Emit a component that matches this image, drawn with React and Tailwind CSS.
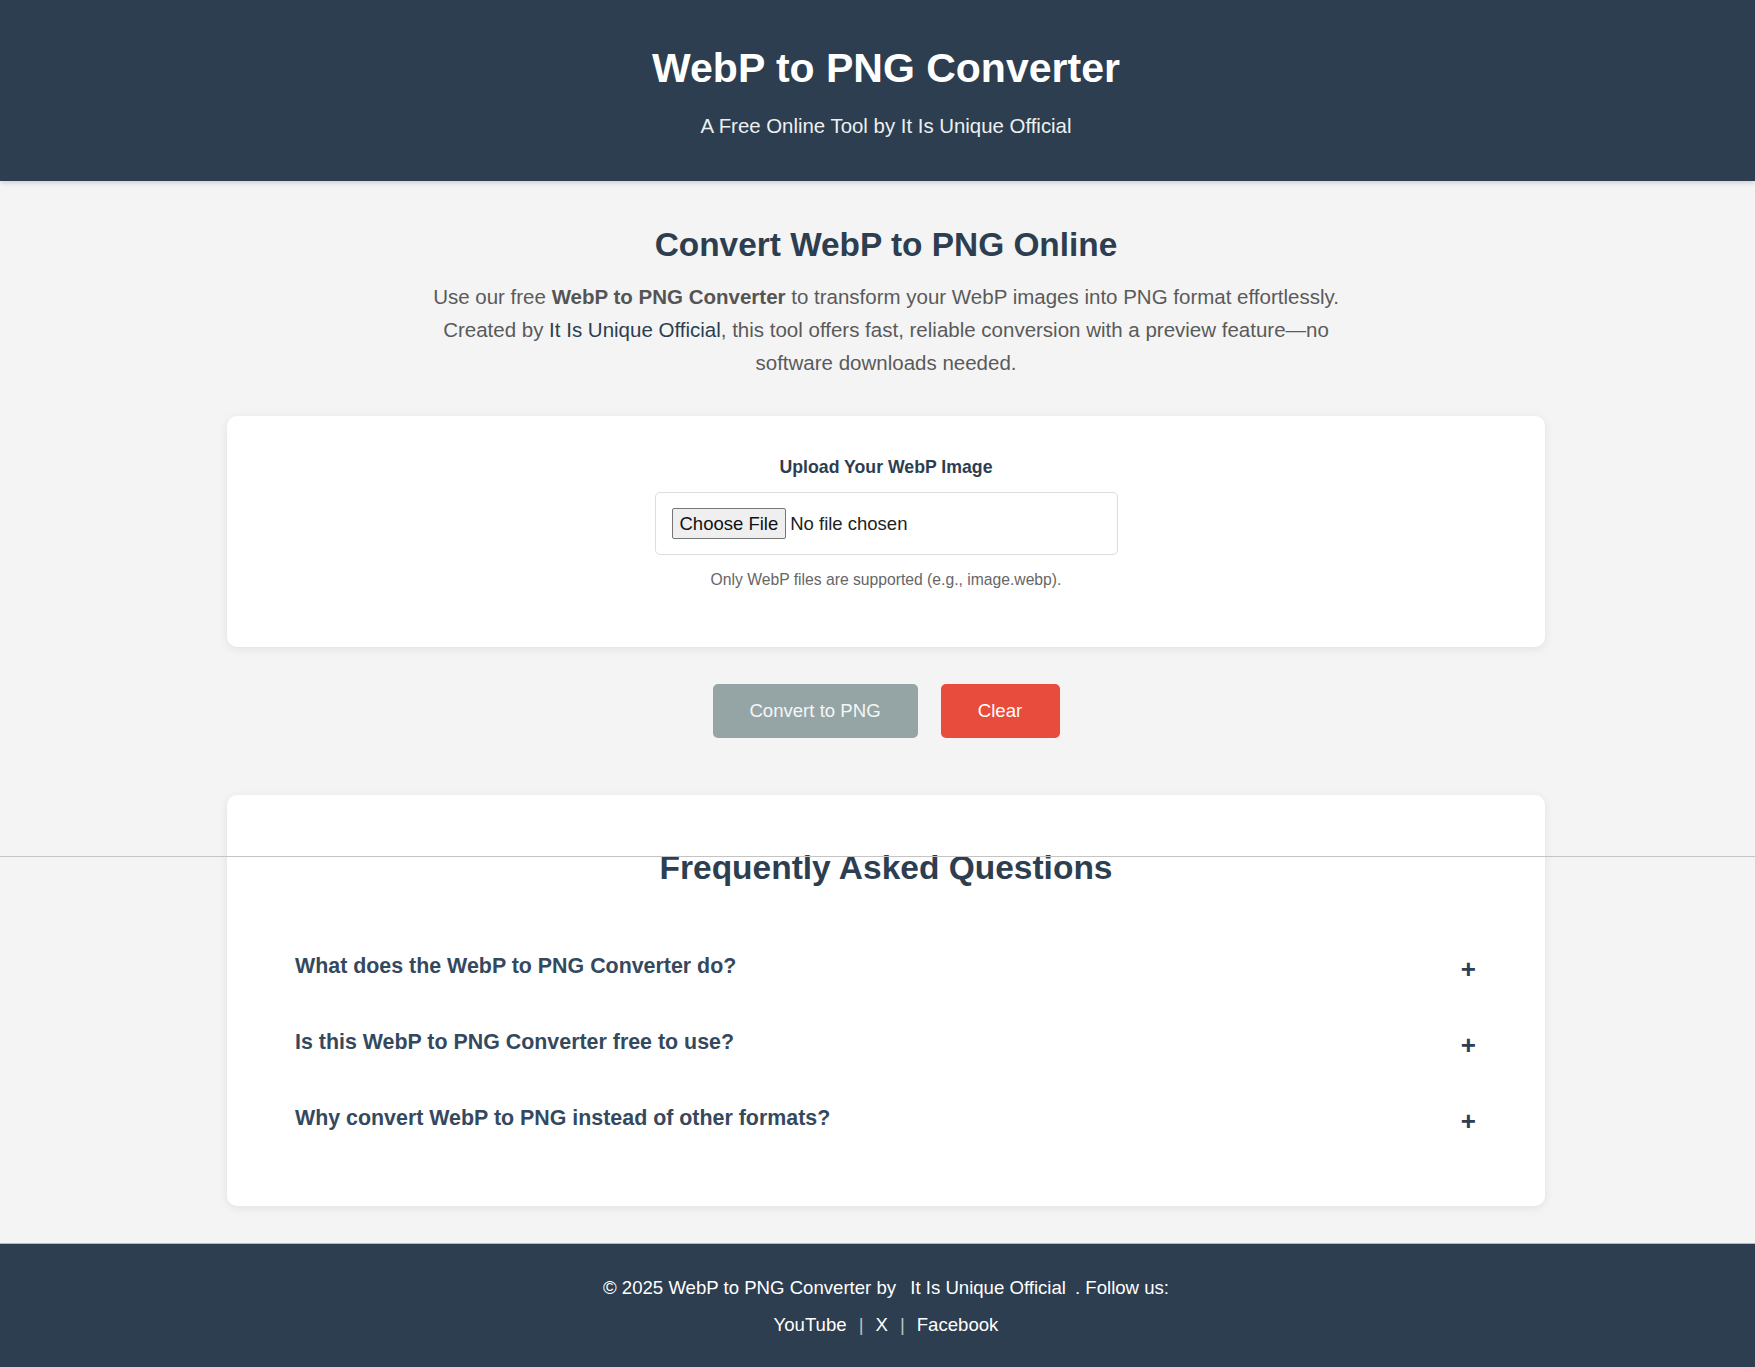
import React, { useState } from "react";

const faqs = [
  "What does the WebP to PNG Converter do?",
  "Is this WebP to PNG Converter free to use?",
  "Why convert WebP to PNG instead of other formats?",
];

const App = () => {
  const [open, setOpen] = useState(null);

  return (
    <div className="relative min-h-screen bg-[#f4f4f4] font-['Liberation_Sans',Arial,sans-serif]">
      {/* Header */}
      <header className="bg-[#2c3e50] h-[181px] shadow-[0_2px_5px_rgba(0,0,0,0.15)] pl-[17px] flex flex-col items-center pt-[44px]">
        <h1 className="text-[41px] leading-[48px] font-bold text-white">WebP to PNG Converter</h1>
        <p className="mt-[22px] text-[20.4px] leading-[24px] text-[#ecf0f1]">
          A Free Online Tool by It Is Unique Official
        </p>
      </header>

      <main className="pl-[17px] flex flex-col items-center pt-[45px] pb-[37px]">
        <h2 className="text-[33.4px] leading-[38px] font-bold text-[#2c3e50]">Convert WebP to PNG Online</h2>
        <p className="mt-[16px] w-[920px] text-center text-[20.5px] leading-[33px] text-[#5a5a5a]">
          Use our free <strong className="text-[#555]">WebP to PNG Converter</strong> to transform your WebP images into PNG format effortlessly. Created by <a className="text-[#2c3e50]">It Is Unique Official</a>, this tool offers fast, reliable conversion with a preview feature—no software downloads needed.
        </p>

        {/* Upload card */}
        <section className="mt-[37px] w-[1318px] h-[231px] bg-white rounded-[10px] shadow-[0_2px_10px_rgba(0,0,0,0.08)] flex flex-col items-center pt-[41px]">
          <label className="text-[17.7px] leading-[20px] font-bold text-[#2c3e50]">Upload Your WebP Image</label>
          <div className="mt-[15px] w-[463px] h-[63px] border border-[#ddd] rounded-[5px] px-[16px] flex items-center">
            <input
              type="file"
              accept="image/webp"
              className="text-[18.5px] text-[#222] file:mr-[4px] file:border file:border-[#767676] file:rounded-[2px] file:bg-[#efefef] file:px-[7px] file:py-[1px] file:text-[#111]"
            />
          </div>
          <p className="mt-[16px] text-[15.7px] leading-[18px] text-[#666]">Only WebP files are supported (e.g., image.webp).</p>
        </section>

        {/* Buttons */}
        <div className="mt-[37px] flex gap-[23px]">
          <button disabled className="w-[205px] h-[54px] rounded-[5px] bg-[#95a5a6] text-[18.6px] text-[#f4f6f6]">
            Convert to PNG
          </button>
          <button className="w-[119px] h-[54px] rounded-[5px] bg-[#e74c3c] text-[18.6px] text-white">Clear</button>
        </div>

        {/* FAQ */}
        <section className="mt-[57px] w-[1318px] h-[411px] bg-white rounded-[10px] shadow-[0_2px_10px_rgba(0,0,0,0.08)] flex flex-col pt-[54px]">
          <h2 className="text-center text-[33.5px] leading-[38px] font-bold text-[#2c3e50]">Frequently Asked Questions</h2>
          <div className="mt-[67px] flex flex-col gap-[52px] px-[68px]">
            {faqs.map((q, i) => (
              <button
                key={q}
                onClick={() => setOpen(open === i ? null : i)}
                className="flex items-center justify-between h-[24px] text-left"
              >
                <span className="text-[21.4px] leading-[24px] font-bold text-[#34495e]">{q}</span>
                <span className="text-[26px] leading-[24px] font-bold text-[#2c3e50] mt-[6px] mr-[1px]">+</span>
              </button>
            ))}
          </div>
        </section>
      </main>

      {/* stray rule over the FAQ card */}
      <div className="absolute left-0 right-0 top-[856px] h-px bg-[#c4c4c4]" />

      {/* Footer */}
      <footer className="bg-[#2c3e50] border-t border-[#aebbc7] pl-[17px] h-[124px] flex flex-col items-center pt-[33px] text-[18.6px] leading-[21px] text-white">
        <p>
          © 2025 WebP to PNG Converter by <a className="mx-[9px]">It Is Unique Official</a>. Follow us:
        </p>
        <p className="mt-[16px]">
          <a>YouTube</a>
          <span className="mx-[12px] text-[#bdc3c7]">|</span>
          <a>X</a>
          <span className="mx-[12px] text-[#bdc3c7]">|</span>
          <a>Facebook</a>
        </p>
      </footer>
    </div>
  );
};

export default App;
